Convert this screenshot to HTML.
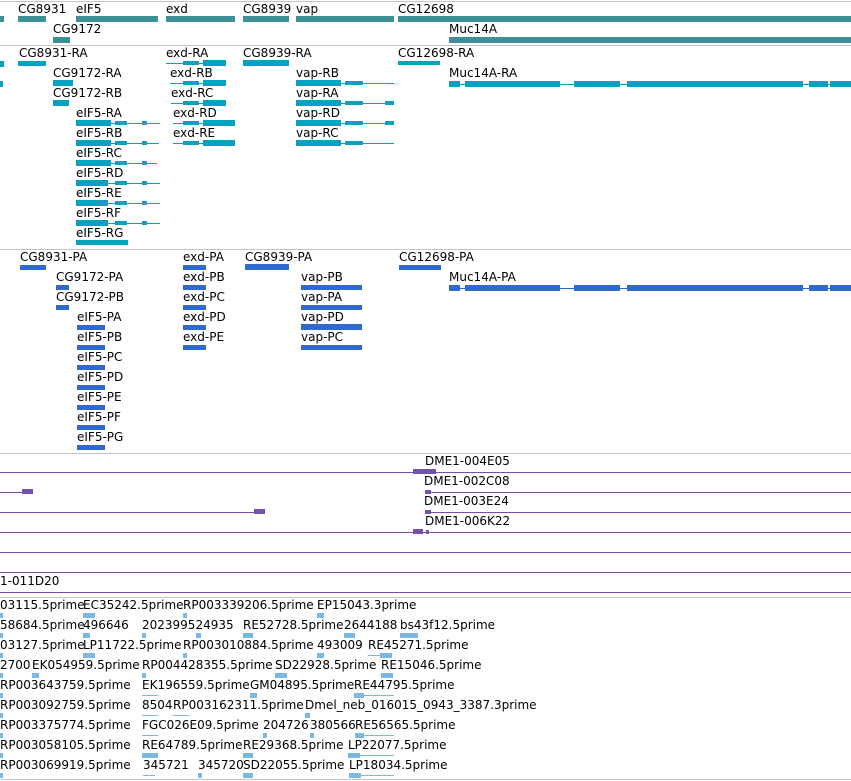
<!DOCTYPE html>
<html><head><meta charset="utf-8"><style>
body{margin:0;width:851px;height:781px;background:#fff;position:relative;overflow:hidden;font-family:"DejaVu Sans","Liberation Sans",sans-serif}
.t{position:absolute;font-size:12px;line-height:14px;color:#000;white-space:nowrap;letter-spacing:0}
.s{position:absolute;left:0;width:851px;height:1px;background:#c4c4c4}
.g,.r,.p,.u,.l{position:absolute}
.g{background:#3f9096;height:6px}
.r{background:#0aa0c0;height:6px}
.p{background:#2f6acc;height:6px}
.u{background:#7452ac;height:1px}
.l{background:#7cb9e2;height:5px}
.rl{position:absolute;background:#0aa0c0;height:1px}
.pl{position:absolute;background:#2f6acc;height:1px}
.ll{position:absolute;background:#7cb9e2;height:1px}
</style></head><body>
<div class="s" style="top:1px"></div>
<div class="s" style="top:45px"></div>
<div class="s" style="top:249px"></div>
<div class="s" style="top:453px"></div>
<div class="s" style="top:597px"></div>
<div class="s" style="top:779px"></div>

<!-- genes -->
<div class="t" style="left:18px;top:2px">CG8931</div>
<div class="t" style="left:76px;top:2px">eIF5</div>
<div class="t" style="left:166px;top:2px">exd</div>
<div class="t" style="left:243px;top:2px">CG8939</div>
<div class="t" style="left:296px;top:2px">vap</div>
<div class="t" style="left:398px;top:2px">CG12698</div>
<div class="t" style="left:53px;top:22px">CG9172</div>
<div class="t" style="left:449px;top:22px">Muc14A</div>
<div class="g" style="left:0;top:16px;width:4px"></div>
<div class="g" style="left:18px;top:16px;width:28px"></div>
<div class="g" style="left:76px;top:16px;width:82px"></div>
<div class="g" style="left:166px;top:16px;width:69px"></div>
<div class="g" style="left:243px;top:16px;width:46px"></div>
<div class="g" style="left:296px;top:16px;width:98px"></div>
<div class="g" style="left:398px;top:16px;width:453px"></div>
<div class="g" style="left:53px;top:37px;width:17px"></div>
<div class="g" style="left:449px;top:37px;width:402px"></div>

<!-- transcripts -->
<div class="t" style="left:19px;top:46px">CG8931-RA</div>
<div class="t" style="left:166px;top:46px">exd-RA</div>
<div class="t" style="left:243px;top:46px">CG8939-RA</div>
<div class="t" style="left:398px;top:46px">CG12698-RA</div>
<div class="t" style="left:53px;top:66px">CG9172-RA</div>
<div class="t" style="left:170px;top:66px">exd-RB</div>
<div class="t" style="left:296px;top:66px">vap-RB</div>
<div class="t" style="left:449px;top:66px">Muc14A-RA</div>
<div class="t" style="left:53px;top:86px">CG9172-RB</div>
<div class="t" style="left:171px;top:86px">exd-RC</div>
<div class="t" style="left:296px;top:86px">vap-RA</div>
<div class="t" style="left:76px;top:106px">eIF5-RA</div>
<div class="t" style="left:173px;top:106px">exd-RD</div>
<div class="t" style="left:296px;top:106px">vap-RD</div>
<div class="t" style="left:76px;top:126px">eIF5-RB</div>
<div class="t" style="left:173px;top:126px">exd-RE</div>
<div class="t" style="left:296px;top:126px">vap-RC</div>
<div class="t" style="left:76px;top:146px">eIF5-RC</div>
<div class="t" style="left:76px;top:166px">eIF5-RD</div>
<div class="t" style="left:76px;top:186px">eIF5-RE</div>
<div class="t" style="left:76px;top:206px">eIF5-RF</div>
<div class="t" style="left:76px;top:226px">eIF5-RG</div>

<div class="r" style="left:0;top:61px;width:4px"></div>
<div class="r" style="left:18px;top:61px;width:28px;height:5px"></div>
<div class="rl" style="left:166px;top:63px;width:60px"></div><div class="r" style="left:203px;top:60px;width:23px"></div><div class="r" style="left:183px;top:61px;width:16px;height:4px"></div>
<div class="r" style="left:243px;top:60px;width:46px"></div>
<div class="r" style="left:398px;top:61px;width:42px;height:4px"></div>
<div class="r" style="left:0;top:81px;width:3px"></div>
<div class="r" style="left:53px;top:80px;width:20px"></div>
<div class="rl" style="left:170px;top:83px;width:56px"></div><div class="r" style="left:203px;top:80px;width:23px"></div><div class="r" style="left:183px;top:81px;width:16px;height:4px"></div>
<div class="rl" style="left:296px;top:83px;width:98px"></div><div class="r" style="left:296px;top:80px;width:45px"></div><div class="r" style="left:345px;top:81px;width:18px;height:4px"></div>
<div class="rl" style="left:449px;top:84px;width:402px"></div>
<div class="r" style="left:449px;top:81px;width:11px"></div><div class="r" style="left:465px;top:81px;width:95px"></div><div class="r" style="left:574px;top:81px;width:46px"></div><div class="r" style="left:627px;top:81px;width:176px"></div><div class="r" style="left:809px;top:81px;width:19px"></div><div class="r" style="left:830px;top:81px;width:21px"></div>
<div class="r" style="left:53px;top:100px;width:16px"></div>
<div class="rl" style="left:171px;top:103px;width:55px"></div><div class="r" style="left:203px;top:100px;width:23px"></div><div class="r" style="left:183px;top:101px;width:16px;height:4px"></div>
<div class="rl" style="left:296px;top:103px;width:98px"></div><div class="r" style="left:296px;top:100px;width:45px"></div><div class="r" style="left:345px;top:101px;width:18px;height:4px"></div><div class="r" style="left:385px;top:101px;width:9px;height:4px"></div>
<div class="rl" style="left:76px;top:123px;width:84px"></div><div class="r" style="left:76px;top:120px;width:35px"></div><div class="r" style="left:115px;top:121px;width:12px;height:4px"></div><div class="r" style="left:142px;top:121px;width:5px;height:4px"></div>
<div class="rl" style="left:173px;top:123px;width:62px"></div><div class="r" style="left:203px;top:120px;width:32px"></div><div class="r" style="left:183px;top:121px;width:16px;height:4px"></div>
<div class="rl" style="left:296px;top:123px;width:98px"></div><div class="r" style="left:296px;top:120px;width:45px"></div><div class="r" style="left:345px;top:121px;width:18px;height:4px"></div><div class="r" style="left:385px;top:121px;width:9px;height:4px"></div>
<div class="rl" style="left:76px;top:143px;width:83px"></div><div class="r" style="left:76px;top:140px;width:35px"></div><div class="r" style="left:115px;top:141px;width:12px;height:4px"></div><div class="r" style="left:142px;top:141px;width:5px;height:4px"></div>
<div class="rl" style="left:173px;top:143px;width:62px"></div><div class="r" style="left:203px;top:140px;width:32px"></div><div class="r" style="left:183px;top:141px;width:16px;height:4px"></div>
<div class="rl" style="left:296px;top:143px;width:98px"></div><div class="r" style="left:296px;top:140px;width:45px"></div><div class="r" style="left:345px;top:141px;width:18px;height:4px"></div>
<div class="rl" style="left:76px;top:163px;width:81px"></div><div class="r" style="left:76px;top:160px;width:35px"></div><div class="r" style="left:115px;top:161px;width:12px;height:4px"></div><div class="r" style="left:142px;top:161px;width:5px;height:4px"></div>
<div class="rl" style="left:76px;top:183px;width:84px"></div><div class="r" style="left:76px;top:180px;width:32px"></div><div class="r" style="left:115px;top:181px;width:12px;height:4px"></div><div class="r" style="left:142px;top:181px;width:5px;height:4px"></div>
<div class="rl" style="left:76px;top:203px;width:84px"></div><div class="r" style="left:76px;top:200px;width:32px"></div><div class="r" style="left:115px;top:201px;width:12px;height:4px"></div><div class="r" style="left:142px;top:201px;width:5px;height:4px"></div>
<div class="rl" style="left:76px;top:223px;width:84px"></div><div class="r" style="left:76px;top:220px;width:32px"></div><div class="r" style="left:115px;top:221px;width:12px;height:4px"></div><div class="r" style="left:142px;top:221px;width:5px;height:4px"></div>
<div class="r" style="left:76px;top:240px;width:52px;height:5px"></div>

<!-- proteins -->
<div class="t" style="left:20px;top:250px">CG8931-PA</div>
<div class="t" style="left:183px;top:250px">exd-PA</div>
<div class="t" style="left:245px;top:250px">CG8939-PA</div>
<div class="t" style="left:399px;top:250px">CG12698-PA</div>
<div class="t" style="left:56px;top:270px">CG9172-PA</div>
<div class="t" style="left:183px;top:270px">exd-PB</div>
<div class="t" style="left:301px;top:270px">vap-PB</div>
<div class="t" style="left:449px;top:270px">Muc14A-PA</div>
<div class="t" style="left:56px;top:290px">CG9172-PB</div>
<div class="t" style="left:183px;top:290px">exd-PC</div>
<div class="t" style="left:301px;top:290px">vap-PA</div>
<div class="t" style="left:77px;top:310px">eIF5-PA</div>
<div class="t" style="left:183px;top:310px">exd-PD</div>
<div class="t" style="left:301px;top:310px">vap-PD</div>
<div class="t" style="left:77px;top:330px">eIF5-PB</div>
<div class="t" style="left:183px;top:330px">exd-PE</div>
<div class="t" style="left:301px;top:330px">vap-PC</div>
<div class="t" style="left:77px;top:350px">eIF5-PC</div>
<div class="t" style="left:77px;top:370px">eIF5-PD</div>
<div class="t" style="left:77px;top:390px">eIF5-PE</div>
<div class="t" style="left:77px;top:410px">eIF5-PF</div>
<div class="t" style="left:77px;top:430px">eIF5-PG</div>

<div class="p" style="left:20px;top:265px;width:26px;height:5px"></div>
<div class="p" style="left:183px;top:265px;width:23px;height:5px"></div>
<div class="p" style="left:245px;top:264px;width:44px"></div>
<div class="p" style="left:399px;top:265px;width:42px;height:5px"></div>
<div class="p" style="left:56px;top:285px;width:13px;height:5px"></div>
<div class="p" style="left:183px;top:285px;width:23px;height:5px"></div>
<div class="p" style="left:301px;top:285px;width:61px;height:5px"></div>
<div class="pl" style="left:449px;top:288px;width:402px"></div>
<div class="p" style="left:449px;top:285px;width:11px"></div><div class="p" style="left:465px;top:285px;width:95px"></div><div class="p" style="left:574px;top:285px;width:46px"></div><div class="p" style="left:627px;top:285px;width:176px"></div><div class="p" style="left:809px;top:285px;width:19px"></div><div class="p" style="left:830px;top:285px;width:21px"></div>
<div class="p" style="left:56px;top:305px;width:13px;height:5px"></div>
<div class="p" style="left:183px;top:305px;width:23px;height:5px"></div>
<div class="p" style="left:301px;top:305px;width:61px;height:5px"></div>
<div class="p" style="left:77px;top:325px;width:28px;height:5px"></div>
<div class="p" style="left:183px;top:325px;width:23px;height:5px"></div>
<div class="p" style="left:301px;top:324px;width:61px"></div>
<div class="p" style="left:77px;top:345px;width:28px;height:5px"></div>
<div class="p" style="left:183px;top:345px;width:23px;height:5px"></div>
<div class="p" style="left:301px;top:345px;width:61px;height:5px"></div>
<div class="p" style="left:77px;top:365px;width:28px;height:5px"></div>
<div class="p" style="left:77px;top:385px;width:28px;height:5px"></div>
<div class="p" style="left:77px;top:405px;width:28px;height:5px"></div>
<div class="p" style="left:77px;top:425px;width:28px;height:5px"></div>
<div class="p" style="left:77px;top:445px;width:28px;height:5px"></div>

<!-- purple -->
<div class="t" style="left:425px;top:454px">DME1-004E05</div>
<div class="t" style="left:424px;top:474px">DME1-002C08</div>
<div class="t" style="left:424px;top:494px">DME1-003E24</div>
<div class="t" style="left:425px;top:514px">DME1-006K22</div>
<div class="t" style="left:0;top:574px">1-011D20</div>
<div class="u" style="left:0;top:472px;width:851px"></div>
<div class="u" style="left:413px;top:469px;width:23px;height:5px"></div>
<div class="u" style="left:0;top:492px;width:33px"></div><div class="u" style="left:22px;top:489px;width:11px;height:5px"></div>
<div class="u" style="left:425px;top:492px;width:426px"></div><div class="u" style="left:425px;top:490px;width:6px;height:4px"></div>
<div class="u" style="left:0;top:512px;width:265px"></div><div class="u" style="left:254px;top:509px;width:11px;height:5px"></div>
<div class="u" style="left:425px;top:512px;width:426px"></div><div class="u" style="left:425px;top:510px;width:6px;height:4px"></div>
<div class="u" style="left:0;top:532px;width:851px"></div><div class="u" style="left:413px;top:529px;width:10px;height:5px"></div><div class="u" style="left:426px;top:530px;width:3px;height:4px"></div>
<div class="u" style="left:0;top:552px;width:851px"></div>
<div class="u" style="left:0;top:572px;width:851px"></div>
<div class="u" style="left:0;top:592px;width:851px"></div>

<!-- light blue -->
<div class="t" style="left:0;top:598px">03115.5prime</div><div class="t" style="left:83px;top:598px">EC35242.5prime</div><div class="t" style="left:183px;top:598px">RP003339206.5prime</div><div class="t" style="left:317px;top:598px">EP15043.3prime</div>
<div class="t" style="left:0;top:618px">58684.5prime</div><div class="t" style="left:83px;top:618px">496646</div><div class="t" style="left:142px;top:618px">202399524935</div><div class="t" style="left:243px;top:618px">RE52728.5prime</div><div class="t" style="left:344px;top:618px">2644188</div><div class="t" style="left:400px;top:618px">bs43f12.5prime</div>
<div class="t" style="left:0;top:638px">03127.5prime</div><div class="t" style="left:83px;top:638px">LP11722.5prime</div><div class="t" style="left:183px;top:638px">RP003010884.5prime</div><div class="t" style="left:317px;top:638px">493009</div><div class="t" style="left:368px;top:638px">RE45271.5prime</div>
<div class="t" style="left:0;top:658px">2700</div><div class="t" style="left:32px;top:658px">EK054959.5prime</div><div class="t" style="left:142px;top:658px">RP004428355.5prime</div><div class="t" style="left:275px;top:658px">SD22928.5prime</div><div class="t" style="left:381px;top:658px">RE15046.5prime</div>
<div class="t" style="left:0;top:678px">RP003643759.5prime</div><div class="t" style="left:142px;top:678px">EK196559.5prime</div><div class="t" style="left:250px;top:678px">GM04895.5prime</div><div class="t" style="left:354px;top:678px">RE44795.5prime</div>
<div class="t" style="left:0;top:698px">RP003092759.5prime</div><div class="t" style="left:142px;top:698px">8504</div><div class="t" style="left:173px;top:698px">RP003162311.5prime</div><div class="t" style="left:305px;top:698px">Dmel_neb_016015_0943_3387.3prime</div>
<div class="t" style="left:0;top:718px">RP003375774.5prime</div><div class="t" style="left:142px;top:718px">FGC026E09.5prime</div><div class="t" style="left:263px;top:718px">204726</div><div class="t" style="left:310px;top:718px">380566</div><div class="t" style="left:355px;top:718px">RE56565.5prime</div>
<div class="t" style="left:0;top:738px">RP003058105.5prime</div><div class="t" style="left:142px;top:738px">RE64789.5prime</div><div class="t" style="left:243px;top:738px">RE29368.5prime</div><div class="t" style="left:348px;top:738px">LP22077.5prime</div>
<div class="t" style="left:0;top:758px">RP003069919.5prime</div><div class="t" style="left:143px;top:758px">345721</div><div class="t" style="left:198px;top:758px">345720</div><div class="t" style="left:243px;top:758px">SD22055.5prime</div><div class="t" style="left:349px;top:758px">LP18034.5prime</div>

<div class="l" style="left:0;top:613px;width:3px"></div><div class="l" style="left:83px;top:613px;width:12px"></div><div class="l" style="left:183px;top:613px;width:4px"></div><div class="l" style="left:317px;top:613px;width:7px"></div>
<div class="l" style="left:0;top:633px;width:3px"></div><div class="l" style="left:83px;top:633px;width:7px"></div><div class="l" style="left:142px;top:633px;width:4px"></div><div class="l" style="left:196px;top:633px;width:5px"></div><div class="l" style="left:243px;top:633px;width:10px"></div><div class="l" style="left:344px;top:633px;width:11px"></div><div class="l" style="left:400px;top:633px;width:18px"></div>
<div class="l" style="left:0;top:653px;width:3px"></div><div class="l" style="left:83px;top:653px;width:12px"></div><div class="l" style="left:183px;top:653px;width:4px"></div><div class="l" style="left:317px;top:653px;width:7px"></div><div class="ll" style="left:368px;top:655px;width:24px"></div><div class="l" style="left:380px;top:653px;width:12px"></div>
<div class="l" style="left:0;top:673px;width:3px"></div><div class="l" style="left:32px;top:673px;width:7px"></div><div class="l" style="left:142px;top:673px;width:4px"></div><div class="l" style="left:275px;top:673px;width:12px"></div><div class="l" style="left:381px;top:673px;width:12px"></div>
<div class="l" style="left:0;top:693px;width:3px"></div><div class="ll" style="left:142px;top:695px;width:16px"></div><div class="l" style="left:250px;top:693px;width:7px"></div><div class="ll" style="left:354px;top:695px;width:40px"></div><div class="l" style="left:354px;top:693px;width:10px"></div>
<div class="l" style="left:0;top:713px;width:3px"></div><div class="ll" style="left:142px;top:715px;width:16px"></div><div class="ll" style="left:173px;top:715px;width:16px"></div><div class="l" style="left:305px;top:713px;width:5px"></div>
<div class="l" style="left:0;top:733px;width:3px"></div><div class="ll" style="left:142px;top:735px;width:16px"></div><div class="l" style="left:263px;top:733px;width:4px"></div><div class="l" style="left:310px;top:733px;width:4px"></div><div class="ll" style="left:355px;top:735px;width:39px"></div><div class="l" style="left:355px;top:733px;width:9px"></div>
<div class="l" style="left:0;top:753px;width:3px"></div><div class="l" style="left:142px;top:753px;width:16px"></div><div class="l" style="left:243px;top:753px;width:10px"></div><div class="ll" style="left:348px;top:755px;width:46px"></div><div class="l" style="left:348px;top:753px;width:12px"></div>
<div class="l" style="left:0;top:773px;width:3px"></div><div class="ll" style="left:143px;top:775px;width:12px"></div><div class="l" style="left:198px;top:773px;width:4px"></div><div class="l" style="left:243px;top:773px;width:10px"></div><div class="ll" style="left:349px;top:775px;width:45px"></div><div class="l" style="left:349px;top:773px;width:12px"></div>
</body></html>
